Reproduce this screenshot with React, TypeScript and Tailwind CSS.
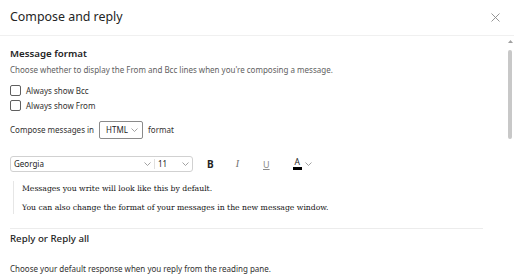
import React from "react";

const Chevron = ({ className = "" }: { className?: string }) => (
  <svg width="7" height="4" viewBox="0 0 7 4" className={className} fill="none">
    <path d="M0.5 0.5 L3.5 3.5 L6.5 0.5" stroke="#8a8a8a" strokeWidth="0.8" />
  </svg>
);

const Checkbox = ({ label }: { label: string }) => (
  <div className="flex items-center h-[11px] gap-[5px]">
    <div className="w-[11px] h-[11px] rounded-[2px] border border-[#5f5f5f] bg-white shrink-0" />
    <span className="text-[8px] text-[#323130] leading-none">{label}</span>
  </div>
);

export default function App() {
  return (
    <div
      className="w-[514px] h-[275px] bg-white overflow-hidden flex flex-col text-[#242424]"
      style={{ fontFamily: '"Noto Sans", "Open Sans", sans-serif' }}
    >
      <div className="h-[36px] shrink-0 border-b border-[#f0f0f0] flex items-center justify-between pl-[10px] pr-[14px]">
        <span className="text-[12.4px] leading-none text-[#242424]">Compose and reply</span>
        <svg width="9" height="9" viewBox="0 0 9 9">
          <path d="M0.5 0.5 L8.5 8.5 M8.5 0.5 L0.5 8.5" stroke="#8a8a8a" strokeWidth="0.9" />
        </svg>
      </div>
      <div className="flex flex-1 min-h-0">
        <div className="flex-1 pl-[10px] pr-[23px] flex flex-col">
          <div className="mt-[11px] h-[16px] flex items-center text-[9.7px] font-semibold leading-none text-[#242424]">
            Message format
          </div>
          <div className="mt-[2px] h-[14px] flex items-center text-[8px] leading-none text-[#616161]">
            Choose whether to display the From and Bcc lines when you're composing a message.
          </div>
          <div className="mt-[9px] flex flex-col gap-[4px]">
            <Checkbox label="Always show Bcc" />
            <Checkbox label="Always show From" />
          </div>
          <div className="mt-[10px] flex items-center h-[18px]">
            <span className="text-[8px] text-[#323130] leading-none">Compose messages in</span>
            <div className="ml-[5px] w-[44px] h-[18px] border border-[#8a8a8a] rounded-[2px] flex items-center justify-between pl-[6px] pr-[4px]">
              <span className="text-[8px] leading-none text-[#242424]">HTML</span>
              <Chevron />
            </div>
            <span className="ml-[5px] text-[8px] text-[#323130] leading-none">format</span>
          </div>
          <div className="mt-[17px] flex items-center h-[16px]">
            <div className="w-[183px] h-[16px] border border-[#d1d1d1] rounded-[3px] flex items-center">
              <div className="w-[143px] flex items-center justify-between pl-[3px] pr-[3px]">
                <span className="text-[8px] leading-none text-[#242424]">Georgia</span>
                <Chevron />
              </div>
              <div className="w-px h-[10px] bg-[#e0e0e0]" />
              <div className="flex-1 flex items-center justify-between pl-[3px] pr-[3px]">
                <span className="text-[8px] leading-none text-[#242424]">11</span>
                <Chevron />
              </div>
            </div>
            <span className="ml-[14px] text-[10px] font-bold leading-none text-[#242424]">B</span>
            <span
              className="ml-[22px] text-[10px] leading-none text-[#707070] italic"
              style={{ fontFamily: '"Liberation Serif", serif' }}
            >
              I
            </span>
            <span className="ml-[24px] text-[9px] leading-none text-[#8a8a8a] underline">U</span>
            <div className="ml-[23px] flex flex-col items-center">
              <span className="text-[8.5px] leading-none text-[#242424]">A</span>
              <div className="w-[9px] h-[3px] bg-[#000]" />
            </div>
            <Chevron className="ml-[3px]" />
          </div>
          <div
            className="mt-[9px] ml-[3px] border-l border-[#e6e6e6] pl-[8px] pt-[2px] pb-[1px] flex flex-col gap-[8px] text-[7.7px] leading-[11px] text-[#111]"
            style={{ fontFamily: '"DejaVu Serif", Georgia, serif' }}
          >
            <span>Messages you write will look like this by default.</span>
            <span>You can also change the format of your messages in the new message window.</span>
          </div>
          <div className="mt-[14px] h-px bg-[#ececec]" />
          <div className="mt-[3px] h-[16px] flex items-center text-[9.7px] font-medium leading-none text-[#242424]">
            Reply or Reply all
          </div>
          <div className="mt-[16px] h-[14px] flex items-center text-[8px] leading-none text-[#323130]">
            Choose your default response when you reply from the reading pane.
          </div>
        </div>
        <div className="w-[8px] shrink-0 flex flex-col items-center pt-[4px]">
          <svg width="5" height="3" viewBox="0 0 5 3">
            <path d="M0 3 L2.5 0 L5 3 Z" fill="#a0a0a0" />
          </svg>
          <div className="mt-[7px] w-[4px] h-[89px] rounded-[2px] bg-[#c8c8c8]" />
        </div>
      </div>
    </div>
  );
}
